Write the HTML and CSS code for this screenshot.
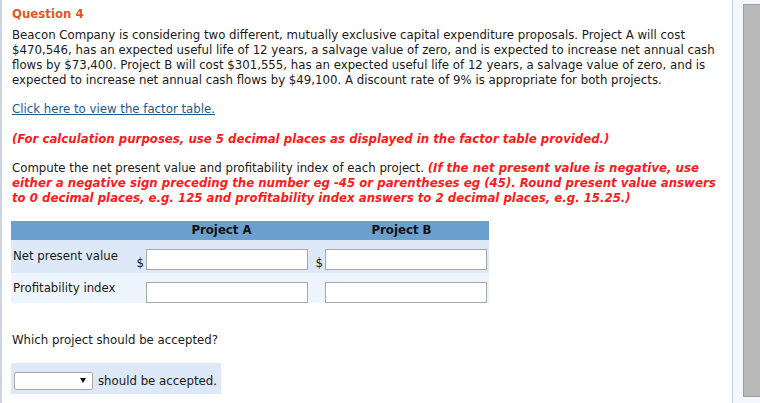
FILE: index.html
```html
<!DOCTYPE html>
<html lang="en">
<head>
    <meta charset="UTF-8">
    <title>Question 4</title>
    <link rel="stylesheet" href="styles.css">
</head>
<body>
    <div class="page">
        <div class="content">
            <h2 class="question-title">Question 4</h2>
            <p class="question-text">Beacon Company is considering two different, mutually exclusive capital expenditure proposals. Project A will cost $470,546, has an expected useful life of 12 years, a salvage value of zero, and is expected to increase net annual cash flows by $73,400. Project B will cost $301,555, has an expected useful life of 12 years, a salvage value of zero, and is expected to increase net annual cash flows by $49,100. A discount rate of 9% is appropriate for both projects.</p>

            <p class="link-line"><a href="#">Click here to view the factor table.</a></p>

            <p class="note">(For calculation purposes, use 5 decimal places as displayed in the factor table provided.)</p>

            <p class="instructions">Compute the net present value and profitability index of each project. <span class="note">(If the net present value is negative, use either a negative sign preceding the number eg -45 or parentheses eg (45). Round present value answers to 0 decimal places, e.g. 125 and profitability index answers to 2 decimal places, e.g. 15.25.)</span></p>

            <div class="answers">
                <div class="row head">
                    <div></div>
                    <div class="col-title">Project A</div>
                    <div></div>
                    <div class="col-title">Project B</div>
                </div>
                <div class="row npv">
                    <div class="label">Net present value</div>
                    <div class="field"><span class="sign">$</span><input type="text"></div>
                    <div></div>
                    <div class="field"><span class="sign">$</span><input type="text"></div>
                </div>
                <div class="row pi">
                    <div class="label">Profitability index</div>
                    <div class="field"><input type="text"></div>
                    <div></div>
                    <div class="field"><input type="text"></div>
                </div>
            </div>

            <p class="which">Which project should be accepted?</p>

            <div class="accept-box">
                <span class="pick-wrap">
                    <select class="pick">
                        <option></option>
                        <option>Project A</option>
                        <option>Project B</option>
                    </select>
                </span>
                <span>should be accepted.</span>
            </div>
        </div>
        <div class="scroll">
            <div class="thumb"></div>
        </div>
    </div>
</body>
</html>
```

FILE: styles.css
```css
body {
    margin: 0;
    font-family: "DejaVu Sans", Verdana, sans-serif;
    font-size: 11.75px;
    color: #1a1a1a;
    background-color: #fff;
}

.page {
    display: flex;
    height: 403px;
    overflow: hidden;
    border-left: 2px solid #cdd5e3;
}

.content {
    width: 730px;
    padding: 7px 0 0 10px;
}

p,
.question-title {
    margin: 0;
    line-height: 15px;
}

.question-title {
    font-size: 11.75px;
    font-weight: bold;
    color: #e4561f;
}

.question-text {
    margin-top: 6px;
}

.link-line {
    margin-top: 14px;
}

.link-line a {
    color: #1d5a8e;
}

.note {
    color: #ff1a1a;
    font-weight: bold;
    font-style: italic;
}

p.note {
    margin-top: 15px;
}

.instructions {
    margin-top: 14px;
}

/* answer grid */
.answers {
    width: 478px;
    margin: 15px 0 0 -1px;
}

.row {
    display: grid;
    grid-template-columns: 124px 173px 8px 171px;
}

.head {
    height: 19px;
    background-color: #6a9fce;
    font-weight: bold;
    color: #111;
    line-height: 19px;
}

.col-title {
    text-align: center;
}

.npv {
    height: 33px;
    background-color: #dde8f8;
}

.pi {
    height: 30px;
    background-color: #edf4fd;
}

.label {
    padding: 9px 0 0 2px;
    line-height: 15px;
}

.pi .label {
    padding-top: 8px;
}

.field {
    display: flex;
    justify-content: flex-end;
    align-items: flex-end;
    padding-top: 9px;
    height: 21px;
}

.sign {
    margin: 0 2px 1px 0;
    line-height: 12px;
}

.field input {
    box-sizing: border-box;
    width: 162px;
    height: 21px;
    margin: 0;
    border: 1px solid #a8a8a8;
    background: #fff;
}

.which {
    margin-top: 30px;
}

.accept-box {
    display: inline-flex;
    align-items: center;
    gap: 5px;
    margin: 15px 0 0 -1px;
    padding: 9px 4px 4px 3px;
    background-color: #dde8f8;
}

.pick-wrap {
    position: relative;
    display: block;
    height: 18px;
}

.pick {
    display: block;
    width: 79px;
    height: 18px;
    appearance: none;
    border: 1px solid #a8a8a8;
    border-radius: 2px;
    background: #fff;
    font-size: 11px;
}

/* small black arrow like the old windows dropdown */
.pick-wrap::after {
    content: "";
    position: absolute;
    right: 7px;
    top: 6px;
    border-left: 3px solid transparent;
    border-right: 3px solid transparent;
    border-top: 5px solid #111;
    pointer-events: none;
}

.scroll {
    width: 17px;
    border-left: 1px solid #c8d2e5;
    background-color: #f4f7fb;
    padding: 4px 0 8px 10px;
}

.thumb {
    height: 100%;
    background-color: #b9b9b9;
    border: 1px solid #9d9d9d;
    border-right: none;
}
```
